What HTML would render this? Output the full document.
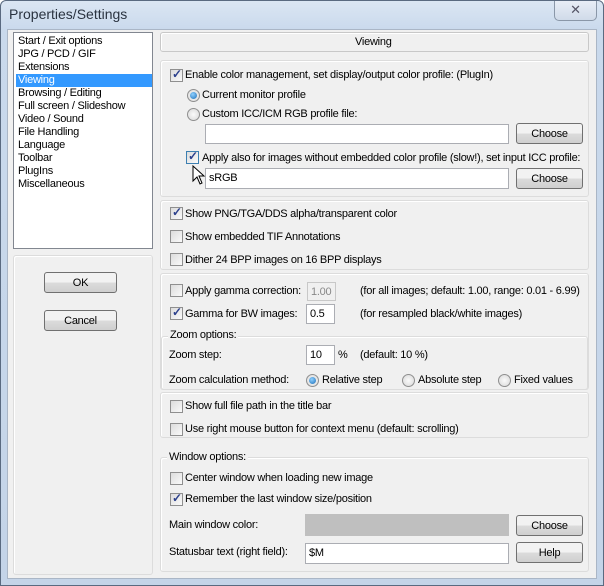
<!DOCTYPE html>
<html><head><meta charset="utf-8"><style>
*{box-sizing:border-box;margin:0;padding:0}
body{width:604px;height:586px;overflow:hidden;background:#fff;font-family:"Liberation Sans",sans-serif;font-size:11px;color:#000;letter-spacing:-0.25px}
.win{position:absolute;left:0;top:0;width:604px;height:586px;background:linear-gradient(#dbe6f3,#c9d9ec 30px,#c4d4e8);border:1px solid #5a6a80;border-radius:6px 6px 0 0}
.title{position:absolute;left:8px;top:5px;font-size:14px;color:#2a3340;letter-spacing:0}
.close{position:absolute;left:553px;top:0;width:43px;height:20px;border:1px solid #8a97a8;border-top:none;border-radius:0 0 5px 5px;background:linear-gradient(#e8eef6,#d0dbe9);text-align:center;font-size:13px;color:#556;line-height:18px}
.client{position:absolute;left:7px;top:29px;width:590px;height:550px;background:#f0f0f0;border:1px solid #aab6c6}
.a{position:absolute;white-space:nowrap}
.list{position:absolute;left:13px;top:32px;width:140px;height:217px;background:#fff;border:1px solid #828790}
.li{position:absolute;left:2px;width:136px;height:13px;line-height:13px;padding-left:2px}
.sel{background:#3399ff;color:#fff}
.grp{position:absolute;border:1px solid #dcdcdc;border-radius:3px;box-shadow:inset 1px 1px 0 #fff}
.btn{position:absolute;border:1px solid #707070;border-radius:3px;background:linear-gradient(#f2f2f2 50%,#dcdcdc 50%,#cfcfcf);text-align:center;line-height:20px}
.cb{position:absolute;width:13px;height:13px;border:1px solid #8f8f8f;background:linear-gradient(135deg,#dcdcdc,#fafafa)}
.cb.on::after{content:"✓";position:absolute;left:1px;top:-3px;font-size:12px;font-weight:bold;color:#2b3f8c}
.rd{position:absolute;width:13px;height:13px;border:1px solid #8f8f8f;border-radius:50%;background:radial-gradient(#fafafa,#d8d8d8)}
.rd.on::after{content:"";position:absolute;left:2px;top:2px;width:7px;height:7px;border-radius:50%;background:radial-gradient(circle at 40% 35%,#8fd0ff,#1d6fb8)}
.inp{position:absolute;background:#fff;border:1px solid #abadb3;padding-left:3px;line-height:18px}
.lbl{position:absolute;white-space:nowrap;line-height:13px}
</style></head><body>
<div class="win">
<div class="title">Properties/Settings</div>
<div class="close">✕</div>
</div>
<div class="client"></div>

<div class="list">
<div class="li" style="top:2px">Start / Exit options</div>
<div class="li" style="top:15px">JPG / PCD / GIF</div>
<div class="li" style="top:28px">Extensions</div>
<div class="li sel" style="top:41px">Viewing</div>
<div class="li" style="top:54px">Browsing / Editing</div>
<div class="li" style="top:67px">Full screen / Slideshow</div>
<div class="li" style="top:80px">Video / Sound</div>
<div class="li" style="top:93px">File Handling</div>
<div class="li" style="top:106px">Language</div>
<div class="li" style="top:119px">Toolbar</div>
<div class="li" style="top:132px">PlugIns</div>
<div class="li" style="top:145px">Miscellaneous</div>
</div>
<div class="grp" style="left:13px;top:255px;width:140px;height:320px"></div>
<div class="btn" style="left:44px;top:272px;width:73px;height:21px">OK</div>
<div class="btn" style="left:44px;top:310px;width:73px;height:21px">Cancel</div>

<div class="grp" style="left:160px;top:32px;width:429px;height:20px;border-color:#c8c8c8"></div>
<div class="lbl" style="left:355px;top:36px">Viewing</div>

<div class="grp" style="left:160px;top:60px;width:429px;height:137px"></div>
<div class="cb on" style="left:170px;top:69px"></div><div class="lbl" style="left:185px;top:69px">Enable color management, set display/output color profile: (PlugIn)</div>
<div class="rd on" style="left:187px;top:89px"></div><div class="lbl" style="left:202px;top:89px">Current monitor profile</div>
<div class="rd" style="left:187px;top:108px"></div><div class="lbl" style="left:202px;top:108px">Custom ICC/ICM RGB profile file:</div>
<div class="inp" style="left:205px;top:124px;width:304px;height:20px"></div>
<div class="btn" style="left:516px;top:123px;width:67px;height:21px">Choose</div>
<div class="cb on" style="left:186px;top:151px;border-color:#3c7fb1"></div><div class="lbl" style="left:202px;top:152px">Apply also for images without embedded color profile (slow!), set input ICC profile:</div>
<div class="inp" style="left:205px;top:168px;width:304px;height:21px">sRGB</div>
<div class="btn" style="left:516px;top:168px;width:67px;height:21px">Choose</div>
<svg class="a" style="left:192px;top:165px" width="14" height="20"><path d="M1 1 L1 16 L5 12 L8 19 L10 18 L7 11 L12 11 Z" fill="#fff" stroke="#000" stroke-width="1"/></svg>

<div class="grp" style="left:160px;top:200px;width:429px;height:70px"></div>
<div class="cb on" style="left:170px;top:207px"></div><div class="lbl" style="left:185px;top:208px">Show PNG/TGA/DDS alpha/transparent color</div>
<div class="cb" style="left:170px;top:230px"></div><div class="lbl" style="left:185px;top:231px">Show embedded TIF Annotations</div>
<div class="cb" style="left:170px;top:253px"></div><div class="lbl" style="left:185px;top:254px">Dither 24 BPP images on 16 BPP displays</div>

<div class="grp" style="left:160px;top:273px;width:429px;height:117px"></div>
<div class="cb" style="left:170px;top:284px"></div><div class="lbl" style="left:185px;top:285px">Apply gamma correction:</div>
<div class="inp" style="left:307px;top:282px;width:29px;height:19px;border-color:#c8c8c8;background:#f0f0f0;color:#888">1.00</div>
<div class="lbl" style="left:360px;top:285px">(for all images; default: 1.00, range: 0.01 - 6.99)</div>
<div class="cb on" style="left:170px;top:307px"></div><div class="lbl" style="left:185px;top:308px">Gamma for BW images:</div>
<div class="inp" style="left:306px;top:304px;width:29px;height:20px">0.5</div>
<div class="lbl" style="left:360px;top:308px">(for resampled black/white images)</div>
<div class="grp" style="left:161px;top:336px;width:427px;height:54px"></div>
<div class="lbl" style="left:168px;top:329px;background:#f0f0f0;padding:0 2px">Zoom options:</div>
<div class="lbl" style="left:169px;top:349px">Zoom step:</div>
<div class="inp" style="left:306px;top:345px;width:29px;height:20px">10</div>
<div class="lbl" style="left:338px;top:349px">%</div>
<div class="lbl" style="left:360px;top:349px">(default: 10 %)</div>
<div class="lbl" style="left:169px;top:374px">Zoom calculation method:</div>
<div class="rd on" style="left:306px;top:374px"></div><div class="lbl" style="left:322px;top:374px">Relative step</div>
<div class="rd" style="left:402px;top:374px"></div><div class="lbl" style="left:418px;top:374px">Absolute step</div>
<div class="rd" style="left:498px;top:374px"></div><div class="lbl" style="left:514px;top:374px">Fixed values</div>

<div class="grp" style="left:160px;top:392px;width:429px;height:46px"></div>
<div class="cb" style="left:170px;top:400px"></div><div class="lbl" style="left:185px;top:400px">Show full file path in the title bar</div>
<div class="cb" style="left:170px;top:423px"></div><div class="lbl" style="left:185px;top:423px">Use right mouse button for context menu (default: scrolling)</div>

<div class="grp" style="left:160px;top:457px;width:429px;height:115px"></div>
<div class="lbl" style="left:167px;top:451px;background:#f0f0f0;padding:0 2px">Window options:</div>
<div class="cb" style="left:170px;top:472px"></div><div class="lbl" style="left:185px;top:472px">Center window when loading new image</div>
<div class="cb on" style="left:170px;top:493px"></div><div class="lbl" style="left:185px;top:493px">Remember the last window size/position</div>
<div class="lbl" style="left:169px;top:519px">Main window color:</div>
<div class="a" style="left:305px;top:514px;width:204px;height:22px;background:#bfbfbf"></div>
<div class="btn" style="left:516px;top:515px;width:67px;height:21px">Choose</div>
<div class="lbl" style="left:169px;top:546px">Statusbar text (right field):</div>
<div class="inp" style="left:305px;top:543px;width:204px;height:21px">$M</div>
<div class="btn" style="left:516px;top:542px;width:67px;height:21px">Help</div>
</body></html>
